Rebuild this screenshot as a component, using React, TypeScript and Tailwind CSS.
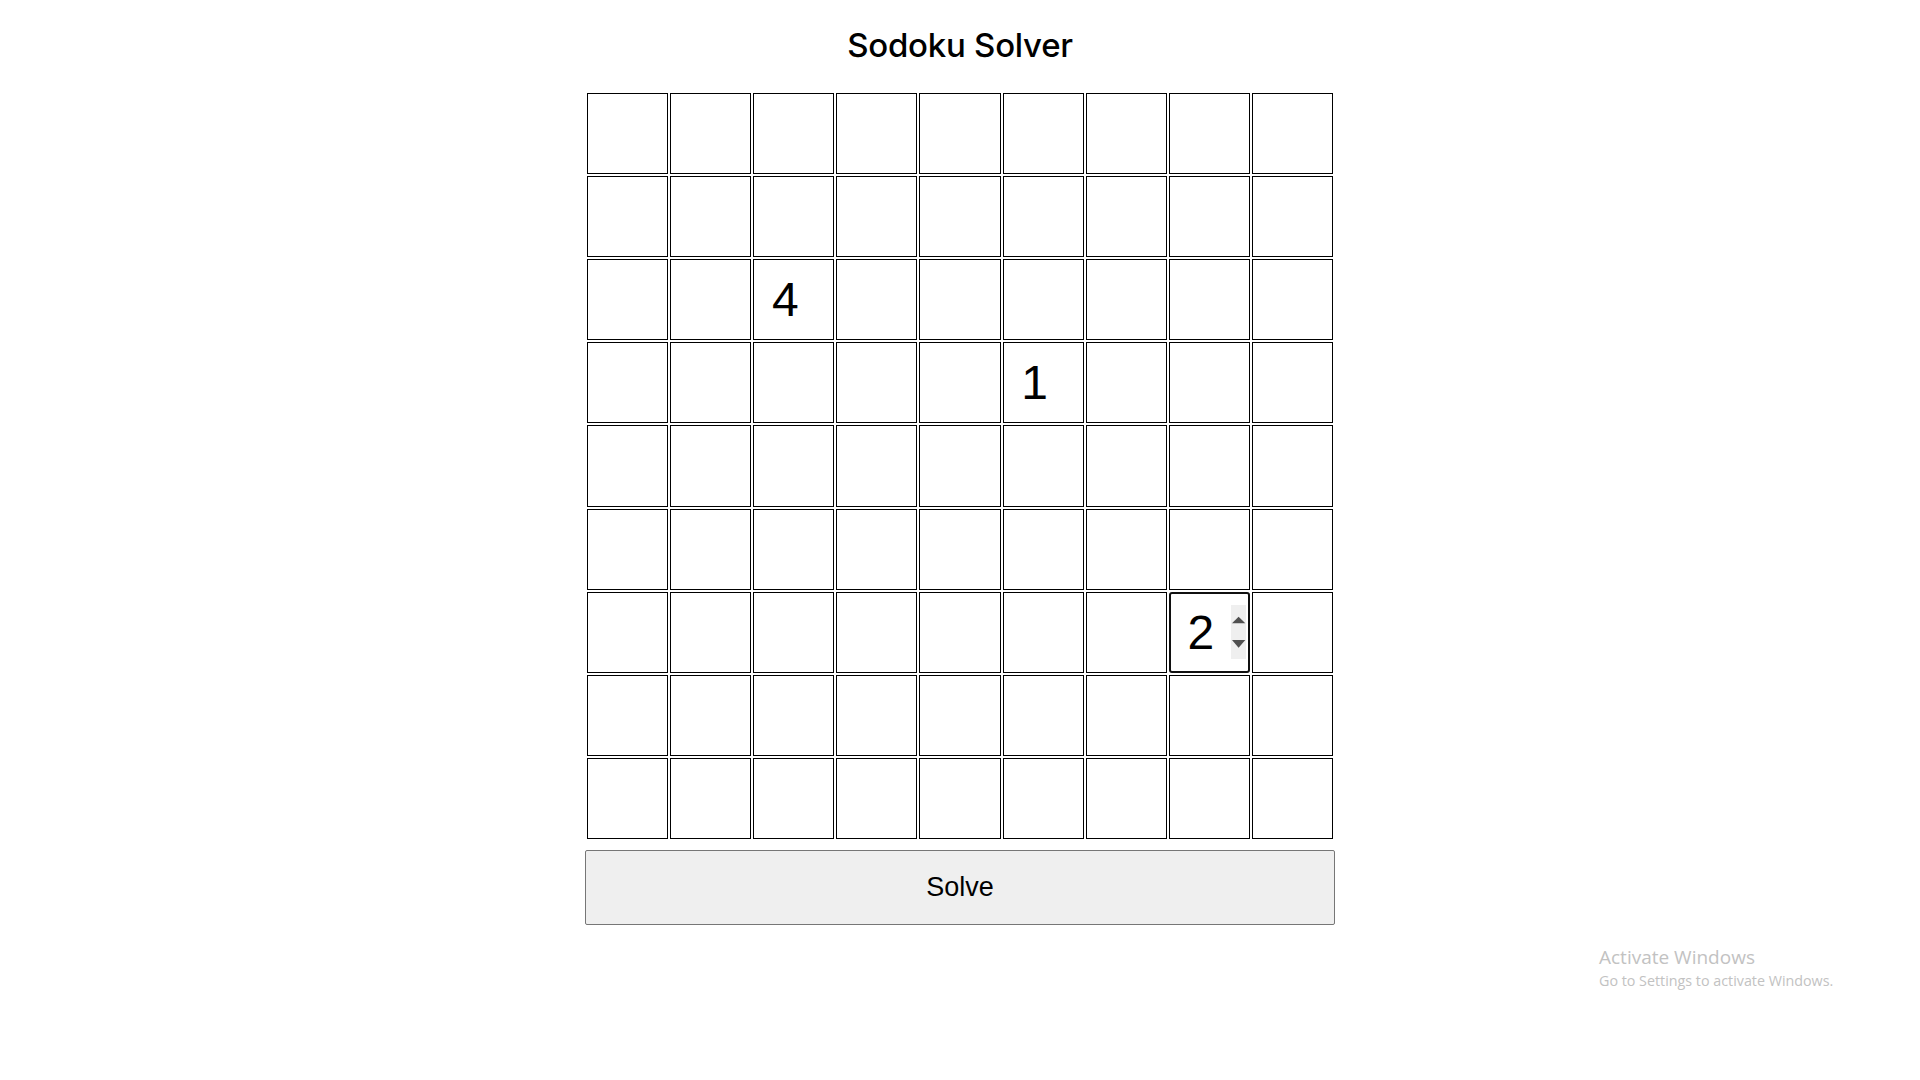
import { useState } from "react";

const initialBoard: string[][] = Array.from({ length: 9 }, () => Array(9).fill(""));
initialBoard[2][2] = "4";
initialBoard[3][5] = "1";
initialBoard[6][7] = "2";

// the cell that has focus in the picture
const ACTIVE = { row: 6, col: 7 };

function Spinner() {
    return (
        <div className="w-[15px] h-[54px] mr-[2px] bg-[#efefef] shrink-0">
            <svg width="15" height="54" viewBox="0 0 15 54">
                <polygon points="1,18.3 14.3,18.3 7.6,11.7" fill="#505050" />
                <polygon points="1,35 14.3,35 7.6,42.7" fill="#505050" />
            </svg>
        </div>
    );
}

export default function App() {
    const [board, setBoard] = useState(initialBoard);

    const setCell = (r: number, c: number, v: string) => {
        const next = board.map(row => [...row]);
        next[r][c] = v.replace(/[^1-9]/g, "").slice(-1);
        setBoard(next);
    };

    return (
        <div className="relative min-h-screen bg-white flex flex-col items-center font-['Liberation_Sans',Arial,sans-serif] text-black">
            <h1 className="mt-[25px] text-[33px] leading-[40px] font-medium font-['Inter',sans-serif] tracking-[-0.25px]">
                Sodoku Solver
            </h1>

            <div className="w-[750px] mt-[28px] flex flex-col items-center">
                <div className="w-[746px] h-[746px] grid grid-cols-9 grid-rows-9 gap-[2px]">
                    {board.map((row, r) =>
                        row.map((val, c) => {
                            const active = r === ACTIVE.row && c === ACTIVE.col;
                            return (
                                <div
                                    key={`${r}-${c}`}
                                    className={
                                        active
                                            ? "flex items-center border-2 border-[#101010] rounded-[3px] bg-white"
                                            : "flex items-center border border-black bg-white"
                                    }
                                >
                                    <input
                                        type="text"
                                        inputMode="numeric"
                                        value={val}
                                        onChange={e => setCell(r, c, e.target.value)}
                                        className="flex-1 min-w-0 h-full bg-transparent text-center text-[48px] leading-none outline-none"
                                    />
                                    {active ? <Spinner /> : <div className="w-[15px] mr-[2px] shrink-0" />}
                                </div>
                            );
                        })
                    )}
                </div>

                <button className="mt-[11px] w-[750px] h-[75px] bg-[#efefef] border border-[#767676] rounded-[2px] text-[27px] text-black">
                    Solve
                </button>
            </div>

            {/* windows watermark */}
            <div className="absolute left-[1599px] top-[945px] text-[#c2c2c2] font-['Open_Sans',sans-serif] pointer-events-none">
                <p className="text-[19px] leading-[24px]">Activate Windows</p>
                <p className="text-[14.3px] leading-[23px]">Go to Settings to activate Windows.</p>
            </div>
        </div>
    );
}
